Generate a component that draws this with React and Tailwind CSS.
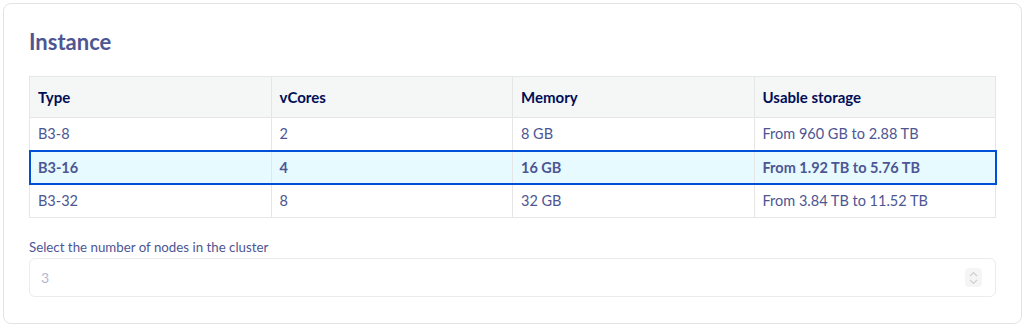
import React from "react";

const rows = [
  { type: "B3-8", cores: "2", mem: "8 GB", storage: "From 960 GB to 2.88 TB" },
  { type: "B3-16", cores: "4", mem: "16 GB", storage: "From 1.92 TB to 5.76 TB", selected: true },
  { type: "B3-32", cores: "8", mem: "32 GB", storage: "From 3.84 TB to 11.52 TB" },
];

const App = () => {
  return (
    <div className="p-[3px] bg-white" style={{ fontFamily: "Lato, 'Noto Sans', sans-serif" }}>
      <div className="border border-[#e3e3e3] rounded-lg pt-[23px] px-[25px] pb-[25px] w-[1019px] h-[321px]">
        <h2 className="text-[22px] leading-[30px] font-bold text-[#4d5693] mb-[19px]">Instance</h2>

        <table className="w-full table-fixed border-collapse">
          <thead>
            <tr className="bg-[#f5f6f6] text-[15px]">
              <th className="h-[41px] px-[8px] text-left font-bold text-[#000e56] border border-[#e6e6e6]">Type</th>
              <th className="h-[41px] px-[8px] text-left font-bold text-[#000e56] border border-[#e6e6e6]">vCores</th>
              <th className="h-[41px] px-[8px] text-left font-bold text-[#000e56] border border-[#e6e6e6]">Memory</th>
              <th className="h-[41px] px-[8px] text-left font-bold text-[#000e56] border border-[#e6e6e6]">Usable storage</th>
            </tr>
          </thead>
          <tbody className="text-[14.5px]">
            {rows.map((r) => (
              <tr
                key={r.type}
                className={
                  r.selected
                    ? "bg-[#e6faff] font-bold outline-2 outline-[#0050d7] -outline-offset-1 relative"
                    : ""
                }
              >
                <td className="h-[33.4px] px-[8px] text-[#4d5693] border border-[#e6e6e6]">{r.type}</td>
                <td className="h-[33.4px] px-[8px] text-[#4d5693] border border-[#e6e6e6]">{r.cores}</td>
                <td className="h-[33.4px] px-[8px] text-[#4d5693] border border-[#e6e6e6]">{r.mem}</td>
                <td className="h-[33.4px] px-[8px] text-[#4d5693] border border-[#e6e6e6]">{r.storage}</td>
              </tr>
            ))}
          </tbody>
        </table>

        <label className="block mt-[21px] mb-[3px] text-[13.3px] leading-[16px] text-[#4d5693]">
          Select the number of nodes in the cluster
        </label>
        <div className="flex items-center justify-between h-[39px] border border-[#ececec] rounded-md px-[11px]">
          <span className="text-[14px] text-[#b3b6d3]">3</span>
          <span className="flex flex-col items-center justify-center w-[17px] h-[19px] bg-[#f5f5f5] rounded-sm mr-[2px]">
            <svg width="9" height="14" viewBox="0 0 9 14" fill="none" stroke="#d0d0d0" strokeWidth="1.2">
              <path d="M1 5l3.5-3.5L8 5" />
              <path d="M1 9l3.5 3.5L8 9" />
            </svg>
          </span>
        </div>
      </div>
    </div>
  );
};

export default App;
